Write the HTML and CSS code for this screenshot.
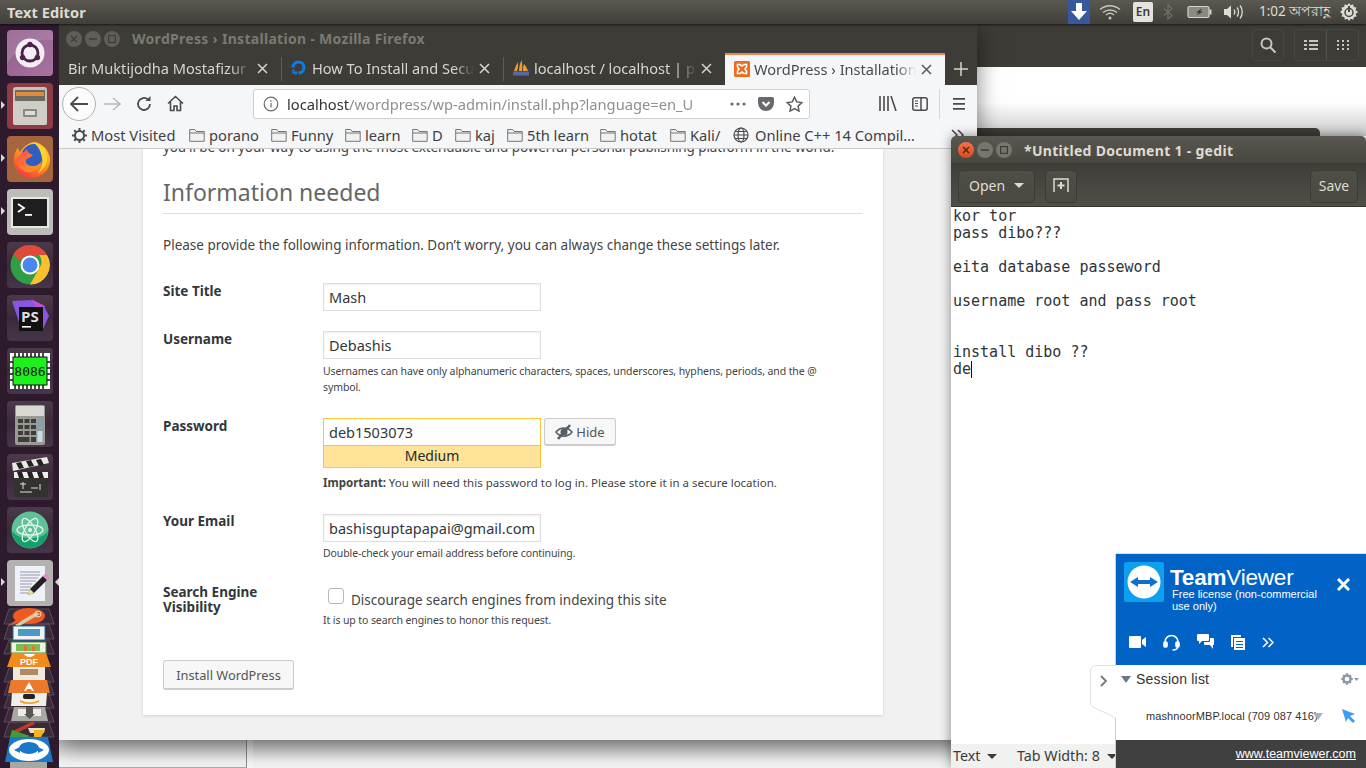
FILE: index.html
```html
<!DOCTYPE html>
<html lang="en">
<head>
<meta charset="utf-8">
<title>Desktop</title>
<link rel="stylesheet" href="styles.css">
</head>
<body>
<div class="screen">
  <header class="topbar">
    <span class="app-name">Text Editor</span>
    <div class="tray">
      <span class="tray-dl"><svg width="22" height="24" viewBox="0 0 22 24"><path d="M8 3h6v8h5l-8 9-8-9h5z" fill="#fff"/></svg></span>
      <svg class="t-wifi" width="22" height="16" viewBox="0 0 22 16" fill="none" stroke="#c9c6bd" stroke-width="1.4"><path d="M1 5.500c6-5 14-5 20 0M4 8.500c4-3.400 10-3.400 14 0M7 11c2.400-2 5.600-2 8 0"/><circle cx="11" cy="14" r="1.500" fill="#c9c6bd" stroke="none"/></svg>
      <span class="t-en">En</span>
      <svg class="t-bt" width="10" height="16" viewBox="0 0 10 16" fill="none" stroke="#6f6d66" stroke-width="1.300"><path d="M1 4.500l8 7-4 3.500V1l4 3.500-8 7"/></svg>
      <svg class="t-bat" width="25" height="14" viewBox="0 0 25 14"><rect x="1" y="1.500" width="21" height="11" rx="1.500" fill="#8b8981" stroke="#d5d2c9" stroke-width="1.200"/><rect x="22.500" y="4.500" width="2" height="5" fill="#d5d2c9"/><path d="M15 3.500l-6 4h3l-3 3 7-4h-3z" fill="#2f2e2a"/></svg>
      <svg class="t-vol" width="21" height="16" viewBox="0 0 21 16" fill="none" stroke="#dedbd2" stroke-width="1.300"><path d="M1 5h3l4-3.500v13L4 11H1z" fill="#dedbd2" stroke="none"/><path d="M11 5.500c1 1.500 1 3.500 0 5M14 3.500c2 2.500 2 6.500 0 9M17 1.500c3 3.500 3 9.500 0 13"/></svg>
      <span class="t-clock">1:02 অপরাহ্ণ</span>
      <svg class="t-pow" width="18" height="18" viewBox="0 0 18 18"><path d="M9 0l1.500 2.300 2.600-1 .6 2.700 2.700.5-.9 2.600L18 9l-2.300 1.900.9 2.600-2.700.5-.6 2.700-2.600-1L9 18l-1.500-2.300-2.600 1-.6-2.700-2.700-.5.9-2.600L0 9l2.300-1.900-.9-2.600 2.700-.5.6-2.700 2.600 1z" fill="#dedbd2"/><circle cx="9" cy="9.500" r="4" fill="none" stroke="#4a4943" stroke-width="1.500"/><rect x="8" y="3" width="2" height="6" fill="#4a4943"/></svg>
    </div>
  </header>

  <nav class="dock">
    <div class="tile t-purple"><svg width="46" height="46" viewBox="0 0 46 46"><path d="M0 34C12 14 30 8 46 10V0H4a4 4 0 0 0-4 4z" fill="#fff" opacity=".12"/><circle cx="23" cy="23" r="14.500" fill="#f4edf3"/><circle cx="23" cy="23" r="8" fill="none" stroke="#4d2248" stroke-width="2.800"/><circle cx="23" cy="14.500" r="2.700" fill="#4d2248"/><circle cx="15.600" cy="27.500" r="2.700" fill="#4d2248"/><circle cx="30.400" cy="27.500" r="2.700" fill="#4d2248"/></svg></div>
    <div class="tile t-red pip"><svg width="46" height="46" viewBox="0 0 46 46"><rect x="6" y="4" width="34" height="38" rx="3" fill="#c4c2ba"/><rect x="8" y="7" width="30" height="11" fill="#6b6a64"/><rect x="9" y="9" width="28" height="4" fill="#e08a3c"/><rect x="6" y="18" width="34" height="24" rx="2" fill="#cfcdc6"/><rect x="16" y="26" width="14" height="8" rx="1" fill="#8a8880"/><rect x="18" y="28" width="10" height="4" fill="#dedcd6"/></svg></div>
    <div class="tile t-orange pip"><svg width="46" height="46" viewBox="0 0 46 46"><defs><linearGradient id="fxa" x1=".8" y1="0" x2=".2" y2="1"><stop offset="0" stop-color="#ffd02e"/><stop offset=".45" stop-color="#ff9a1e"/><stop offset="1" stop-color="#f5303c"/></linearGradient><linearGradient id="fxb" x1="0" y1="0" x2="1" y2="1"><stop offset="0" stop-color="#ff4a4a"/><stop offset="1" stop-color="#ffa01e"/></linearGradient></defs><path d="M7 20c1-4 3-7 4-9 0 2 1 4 2 5 3-5 8-9 14-10 8 1 14 7 16 16 1 11-8 20-19 20S5 32 7 20z" fill="url(#fxa)"/><path d="M14 22c0-9 7-15 15-14 6 2 9 8 8 14-2 8-9 13-16 10-5-2-7-6-7-10z" fill="#2d5ec0"/><path d="M27 7c6 0 12 5 13 12 1 8-3 15-9 18 4-5 5-10 4-15-1-6-3-11-8-15z" fill="#ffd02e"/><path d="M10 24c1-4 4-7 7-8l3-3c0 3 3 5 6 6-2 3-6 3-7 5-1 3 2 6 7 6 4 0 7-2 9-6-1 8-8 13-15 12-6-1-10-6-10-12z" fill="url(#fxb)"/></svg></div>
    <div class="tile t-grey pip"><svg width="46" height="46" viewBox="0 0 46 46"><rect x="4" y="8" width="38" height="31" fill="#e8e8e4"/><rect x="6" y="10" width="34" height="27" fill="#1e1e1e"/><path d="M11 15l6 4-6 4" fill="none" stroke="#fff" stroke-width="1.800"/><rect x="18" y="25" width="7" height="1.800" fill="#fff"/></svg></div>
    <div class="tile t-dark"><svg width="46" height="46" viewBox="0 0 46 46"><circle cx="23" cy="23" r="19.500" fill="#2f9e44"/><path d="M6 13A19.500 19.500 0 0 1 40 13H23a10 10 0 0 0-9 6z" fill="#e04a3a"/><path d="M40 13A19.500 19.500 0 0 1 23 42.500l9-16a10 10 0 0 0 0-13.500z" fill="#fbc02d"/><circle cx="23" cy="23" r="9.500" fill="#fff"/><circle cx="23" cy="23" r="7.500" fill="#4a86ee"/></svg></div>
    <div class="tile t-dark"><svg width="46" height="46" viewBox="0 0 46 46"><path d="M5 6l18-1 14 6 5 10-6 13-13 2-10-6z" fill="#8a55e0"/><path d="M24 4l14 7-6 6z" fill="#c34fd8"/><rect x="12" y="12" width="24" height="24" fill="#111"/><text class="tile-ps" x="14" y="27">PS</text><rect x="15" y="31" width="9" height="1.600" fill="#fff"/></svg></div>
    <div class="tile t-dark"><svg width="46" height="46" viewBox="0 0 46 46"><rect x="3" y="5" width="40" height="36" fill="#fff"/><path d="M8 5v4M12 5v4M16 5v4M20 5v4M24 5v4M28 5v4M32 5v4M36 5v4M8 37v4M12 37v4M16 37v4M20 37v4M24 37v4M28 37v4M32 37v4M36 37v4M3 14h3M3 20h3M3 26h3M3 32h3M40 14h3M40 20h3M40 26h3M40 32h3" stroke="#111" stroke-width="1.500"/><rect x="6" y="9" width="34" height="28" fill="#1ef01e" stroke="#111"/><text class="tile-8086" x="23" y="28">8086</text></svg></div>
    <div class="tile t-dark"><svg width="46" height="46" viewBox="0 0 46 46"><rect x="8" y="4" width="30" height="40" rx="2" fill="#9a9a94"/><rect x="9" y="5" width="28" height="10" fill="#d8d8d2"/><g fill="#3d3d39"><rect x="11" y="18" width="5" height="4"/><rect x="17.500" y="18" width="5" height="4"/><rect x="24" y="18" width="5" height="4"/><rect x="11" y="24" width="5" height="4"/><rect x="17.500" y="24" width="5" height="4"/><rect x="24" y="24" width="5" height="4"/><rect x="11" y="30" width="5" height="4"/><rect x="17.500" y="30" width="5" height="4"/><rect x="24" y="30" width="5" height="4"/><rect x="11" y="36" width="11.500" height="5"/><rect x="24" y="36" width="5" height="5"/></g><rect x="30.500" y="18" width="5" height="4" fill="#7fa6b8"/><rect x="30.500" y="24" width="5" height="4" fill="#7fa6b8"/><rect x="30.500" y="30" width="5" height="11" fill="#c8dbe6"/></svg></div>
    <div class="tile t-dark"><svg width="46" height="46" viewBox="0 0 46 46"><rect x="7" y="18" width="34" height="25" fill="#34322f"/><path d="M5 9L40 3l2 6L6 17z" fill="#e8e8e4"/><path d="M9 9l5-1 3 6-5 1zM19 7l5-1 3 6-5 1zM29 6l5-1 3 6-5 1z" fill="#222"/><rect x="7" y="18" width="34" height="6" fill="#eee"/><path d="M10 18h5l2 6h-5zM20 18h5l2 6h-5zM30 18h5l2 6h-5z" fill="#222"/><path d="M13 30h6M16 28v7M24 34h7M33 30v6M13 38h12" stroke="#ddd" stroke-width="1"/></svg></div>
    <div class="tile t-dark"><svg width="46" height="46" viewBox="0 0 46 46"><circle cx="23" cy="23" r="18.500" fill="#5ec198"/><path d="M5 23a18 18 0 0 0 36 0c-3 11-33 11-36 0z" fill="#14a06a"/><g fill="none" stroke="#e4f7ec" stroke-width="1.300"><ellipse cx="23" cy="23" rx="13" ry="5" transform="rotate(60 23 23)"/><ellipse cx="23" cy="23" rx="13" ry="5" transform="rotate(-60 23 23)"/><ellipse cx="23" cy="23" rx="13" ry="5"/></g><circle cx="23" cy="23" r="2" fill="#e4f7ec"/></svg></div>
    <div class="tile t-light pip pip-r"><svg width="46" height="46" viewBox="0 0 46 46"><rect x="8" y="6" width="30" height="35" fill="#eef1f6"/><path d="M13 12h20M13 15h20M13 18h18M13 21h16M13 24h12M13 27h11M13 30h9M13 33h8" stroke="#99a" stroke-width="1"/><path d="M21 35l2-6 13-13 4 4-13 13z" fill="#222"/><path d="M36 16l3-3 4 4-3 3z" fill="#e78ac4"/><path d="M21 35l2-6 4 4z" fill="#f1e28a"/></svg></div>
    <svg class="stack" width="59" height="162" viewBox="0 0 59 162">
      <g fill="#fff" fill-opacity=".07" stroke="#5a4a5a" stroke-width="1"><path d="M9 3h40l5 15H4zM9 18h40l5 15H4zM9 34h40l5 14H4zM9 62h40l5 14H4zM9 75h40l5 14H4zM9 88h40l5 14H4zM9 102h40l5 14H4zM9 116h40l5 15H4z"/></g>
      <ellipse cx="29" cy="10" rx="16" ry="8" fill="#ef5a22"/><path d="M8 20l8-6h10z" fill="#ef5a22"/><path d="M15 19l21-13 4 2-22 13z" fill="#d9c9a4"/><circle cx="38" cy="8" r="3" fill="none" stroke="#e8e2d4"/>
      <rect x="13" y="20" width="32" height="14" fill="#f2f2ee" stroke="#1b6f9e"/><rect x="18" y="23" width="22" height="7" fill="#4a9ac4"/>
      <rect x="11" y="36" width="35" height="11" fill="#eef2e8" stroke="#4d8a30"/><path d="M16 38h24v7H16z" fill="#7dbd56"/><path d="M24 39h3v6h-3zM32 40h3v5h-3z" fill="#e0763a"/>
      <path d="M12 47h34l5 14H7z" fill="#f28a1c"/><path d="M24 48c2 4 9 4 11 0z" fill="#fff"/><text class="stack-pdf" x="29" y="59">PDF</text>
      <rect x="13" y="61" width="32" height="13" fill="#efe9dd"/><rect x="20" y="63" width="18" height="6" fill="#b08a64"/>
      <path d="M11 74h36l3 13H8z" fill="#ec7a2c"/><path d="M29 76l5 9h-2l-1-2h-4l-1 2h-2z" fill="#fff"/>
      <path d="M12 87h35l-1 13H11z" fill="#efefe9"/><path d="M20 95c5 3 13 3 19 0" fill="none" stroke="#f29a1c" stroke-width="1.500"/><rect x="23" y="88" width="12" height="5" fill="#222" rx="2"/>
      <path d="M14 101h31l3 14H11z" fill="#a9a9a3"/><rect x="18" y="103" width="23" height="7" fill="#ececea"/><path d="M26 101h7v7l2 0-5.500 5-5.500-5h2z" fill="#565652"/>
      <path d="M11 126l22-11 2 3-22 11z" fill="#c0392b"/><path d="M12 124l18 6-6 3-14-2z" fill="#3e9d3a"/><path d="M28 122h17l-1 5H30z" fill="#e9dfc9"/><path d="M34 124h11l-4 7h-7z" fill="#f2b61c"/>
      <path d="M10 131h38l5 25H5z" fill="#1b78c9"/><ellipse cx="29" cy="144" rx="20" ry="11" fill="#fff"/><ellipse cx="29" cy="142" rx="10" ry="6" fill="#1b78c9"/><path d="M14 144l6-3v2h18v-2l6 3-6 3v-2H20v2z" fill="#1b78c9"/>
      <rect x="10" y="156" width="37" height="6" fill="#a7a7a3"/>
    </svg>
  </nav>

  <div class="bg-files">
    <div class="files-head">
      <span class="fh-btn"><svg width="18" height="18" viewBox="0 0 18 18" fill="none" stroke="#c9c6bd" stroke-width="2"><circle cx="7.500" cy="7.500" r="5"/><path d="M11 11l5.500 5.500"/></svg></span>
      <span class="fh-group">
        <span class="fh-seg"><svg width="14" height="12" viewBox="0 0 14 12" fill="#c9c6bd"><path d="M0 1h3v2H0zM5 1h9v2H5zM0 5h3v2H0zM5 5h9v2H5zM0 9h3v2H0zM5 9h9v2H5z"/></svg></span>
        <span class="fh-seg fh-seg2"><svg width="12" height="12" viewBox="0 0 12 12" fill="#c9c6bd"><path d="M0 1h2v2H0zM5 1h2v2H5zM10 1h2v2h-2zM0 5h2v2H0zM5 5h2v2H5zM10 5h2v2h-2zM0 9h2v2H0zM5 9h2v2H5zM10 9h2v2h-2z"/></svg></span>
      </span>
    </div>
  </div>
  <div class="bg-dark"></div>
  <div class="bg-bottom"><div class="bg-bottom-a"></div><div class="bg-bottom-b"></div></div>

  <main class="firefox">
    <div class="ff-title">
      <span class="wbtn"><svg width="8" height="8" viewBox="0 0 8 8" stroke="#3d3c37" stroke-width="1.200"><path d="M1 1l6 6M7 1L1 7"/></svg></span>
      <span class="wbtn"><svg width="8" height="8" viewBox="0 0 8 8" stroke="#3d3c37" stroke-width="1.400"><path d="M0 4h8"/></svg></span>
      <span class="wbtn"><svg width="8" height="8" viewBox="0 0 8 8" fill="none" stroke="#3d3c37" stroke-width="1.200"><rect x=".6" y=".6" width="6.800" height="6.800"/></svg></span>
      <span class="ff-title-text">WordPress › Installation - Mozilla Firefox</span>
    </div>
    <div class="tabs">
      <div class="tab"><span class="tab-label tab-first">Bir Muktijodha Mostafizur</span><svg class="tab-x" width="11" height="11" viewBox="0 0 11 11"><path d="M1 1l9 9M10 1l-9 9"/></svg></div>
      <div class="tab"><svg class="fav" width="18" height="18" viewBox="0 0 18 18" fill="none"><path d="M8.500 15.500v-3A4 4 0 1 0 4.500 8.500h-3a7 7 0 1 1 7 7z" fill="#0d7ee8"/><path d="M4.500 12.500h2.700v3H4.500zM2.300 10.500h2.200v2H2.300zM2.300 12.700h2v2h-2z" fill="#0d7ee8"/></svg><span class="tab-label">How To Install and Secu</span><svg class="tab-x" width="11" height="11" viewBox="0 0 11 11"><path d="M1 1l9 9M10 1l-9 9"/></svg></div>
      <div class="tab"><svg class="fav" width="18" height="18" viewBox="0 0 18 18"><path d="M2 12C3 8 5 5 6 3c.5 3 0 6-1 9zM7 12c0-4 1-7 2.500-11 1 4 1 8 .5 11zM11 12c0-3 0-5 1-7 2 2 3 4 4 7z" fill="#ee9a2c"/><rect x="1" y="12.500" width="16" height="4" fill="#5a68a8"/></svg><span class="tab-label">localhost / localhost | ph</span><svg class="tab-x" width="11" height="11" viewBox="0 0 11 11"><path d="M1 1l9 9M10 1l-9 9"/></svg></div>
      <div class="tab tab-active"><svg class="fav" width="16" height="16" viewBox="0 0 16 16"><rect width="16" height="16" rx="1.500" fill="#f26b1d"/><path d="M3.500 3.500H6L8 5l2-1.500h2.500V6L11 8l1.500 2v2.500H10L8 11l-2 1.500H3.500V10L5 8 3.500 6z" fill="none" stroke="#fff" stroke-width="1.600"/></svg><span class="tab-label">WordPress › Installation</span><svg class="tab-x" width="11" height="11" viewBox="0 0 11 11"><path d="M1 1l9 9M10 1l-9 9"/></svg></div>
      <div class="tab-new"><svg width="14" height="14" viewBox="0 0 14 14" stroke="#d6d4cc" stroke-width="1.500"><path d="M7 0v14M0 7h14"/></svg></div>
    </div>
    <div class="nav">
      <span class="back"><svg width="20" height="18" viewBox="0 0 20 18" fill="none" stroke="#4a4a4f" stroke-width="1.800"><path d="M9 2L2 9l7 7M2 9h17"/></svg></span>
      <svg class="fwd" width="18" height="16" viewBox="0 0 18 16" fill="none" stroke="#b9b9bb" stroke-width="1.600"><path d="M10 2l7 6-7 6M17 8H1"/></svg>
      <svg class="rel" width="16" height="16" viewBox="0 0 16 16" fill="none" stroke="#4a4a4f" stroke-width="1.800"><path d="M14 8a6 6 0 1 1-2-4.500"/><path d="M14.500 0v5h-5z" fill="#4a4a4f" stroke="none"/></svg>
      <svg class="home" width="17" height="17" viewBox="0 0 17 17" fill="none" stroke="#4a4a4f" stroke-width="1.600"><path d="M1 8.500L8.500 1.500 16 8.500M3.500 7v8.500h3.500V11h3v4.500h3.500V7"/></svg>
      <div class="url">
        <svg class="u-info" width="16" height="16" viewBox="0 0 16 16" fill="none" stroke="#6a6a6e" stroke-width="1.200"><circle cx="8" cy="8" r="6.800"/><path d="M8 7v4.500M8 4.200v1.500"/></svg>
        <span class="u-text"><b>localhost</b>/wordpress/wp-admin/install.php?language=en_U</span>
        <svg class="u-dots" width="16" height="4" viewBox="0 0 16 4" fill="#6a6a6e"><circle cx="2" cy="2" r="1.600"/><circle cx="8" cy="2" r="1.600"/><circle cx="14" cy="2" r="1.600"/></svg>
        <svg class="u-pocket" width="16" height="14" viewBox="0 0 16 14"><path d="M1.500 0h13A1.500 1.500 0 0 1 16 1.500V6a8 8 0 0 1-16 0V1.500A1.500 1.500 0 0 1 1.500 0z" fill="#6a6a6e"/><path d="M4.500 5L8 8.500 11.500 5" fill="none" stroke="#fff" stroke-width="2"/></svg>
        <svg class="u-star" width="17" height="16" viewBox="0 0 17 16" fill="none" stroke="#5c5c60" stroke-width="1.500"><path d="M8.500 1.200l2.200 4.700 5.100.7-3.700 3.500.9 5-4.500-2.500L4 15.100l.9-5L1.200 6.600l5.100-.7z"/></svg>
      </div>
      <svg class="n-lib" width="18" height="15" viewBox="0 0 18 15" fill="none" stroke="#4a4a4f" stroke-width="1.600"><path d="M1 0v15M5 0v15M9 0v15M12 0l5 15"/></svg>
      <svg class="n-side" width="16" height="14" viewBox="0 0 16 14" fill="none" stroke="#4a4a4f" stroke-width="1.500"><rect x=".8" y=".8" width="14.400" height="12.400" rx="2"/><path d="M9 1v12"/><path d="M3 4h3M3 6.500h3M3 9h3" stroke-width="1"/></svg>
      <span class="n-div"></span>
      <svg class="n-menu" width="14" height="12" viewBox="0 0 14 12" fill="#4a4a4f"><path d="M1 0h12v1.800H1zM1 5h12v1.800H1zM1 10h12v1.800H1z"/></svg>
    </div>
    <div class="bookmarks">
      <svg class="bm-ic bm-gear" width="15" height="15" viewBox="0 0 15 15"><circle cx="7.500" cy="7.500" r="4.500" fill="none" stroke="#4a4a4f" stroke-width="2"/><path d="M7.500 0v3M7.500 12v3M0 7.500h3M12 7.500h3M2.200 2.200l2 2M10.800 10.800l2 2M2.200 12.800l2-2M10.800 4.200l2-2" stroke="#4a4a4f" stroke-width="2"/></svg><span class="bm bm1">Most Visited</span>
      <svg class="bm-ic" width="16" height="14" viewBox="0 0 16 14"><use href="#folder"/></svg><span class="bm bm2">porano</span>
      <svg class="bm-ic" width="16" height="14" viewBox="0 0 16 14"><use href="#folder"/></svg><span class="bm bm3">Funny</span>
      <svg class="bm-ic" width="16" height="14" viewBox="0 0 16 14"><use href="#folder"/></svg><span class="bm bm4">learn</span>
      <svg class="bm-ic" width="16" height="14" viewBox="0 0 16 14"><use href="#folder"/></svg><span class="bm bm5">D</span>
      <svg class="bm-ic" width="16" height="14" viewBox="0 0 16 14"><use href="#folder"/></svg><span class="bm bm6">kaj</span>
      <svg class="bm-ic" width="16" height="14" viewBox="0 0 16 14"><use href="#folder"/></svg><span class="bm bm7">5th learn</span>
      <svg class="bm-ic" width="16" height="14" viewBox="0 0 16 14"><use href="#folder"/></svg><span class="bm bm8">hotat</span>
      <svg class="bm-ic" width="16" height="14" viewBox="0 0 16 14"><use href="#folder"/></svg><span class="bm bm9">Kali/</span>
      <svg class="bm-ic bm-globe" width="16" height="16" viewBox="0 0 16 16" fill="none" stroke="#4a4a4f" stroke-width="1.200"><circle cx="8" cy="8" r="7"/><ellipse cx="8" cy="8" rx="3" ry="7"/><path d="M1 8h14M2 4.500h12M2 11.500h12"/></svg><span class="bm bm10">Online C++ 14 Compil…</span>
      <svg class="bm-more" width="14" height="12" viewBox="0 0 14 12" fill="none" stroke="#4a4a4f" stroke-width="1.500"><path d="M1 1l5 5-5 5M7 1l5 5-5 5"/></svg>
      <svg class="hidden-defs" width="0" height="0"><defs><g id="folder"><path d="M.7 13.300V1.500h5l1.500 2h8v9.800z" fill="#f1f1ef" stroke="#77777a" stroke-width="1"/><path d="M.7 5h14.500" stroke="#77777a" stroke-width="1"/></g></defs></svg>
    </div>
    <div class="page">
      <section class="card">
        <p class="clipped">you'll be on your way to using the most extendable and powerful personal publishing platform in the world.</p>
        <h1 class="heading">Information needed</h1>
        <p class="intro">Please provide the following information. Don’t worry, you can always change these settings later.</p>

        <div class="row row-site">
          <label class="lbl">Site Title</label>
          <div class="field"><div class="input">Mash</div></div>
        </div>
        <div class="row row-user">
          <label class="lbl">Username</label>
          <div class="field"><div class="input">Debashis</div><p class="hint hint-user">Usernames can have only alphanumeric characters, spaces, underscores, hyphens, periods, and the @ symbol.</p></div>
        </div>
        <div class="row row-pass">
          <label class="lbl">Password</label>
          <div class="field">
            <div class="pass-line">
              <div class="pass-box"><div class="pass-in">deb1503073</div><div class="pass-str">Medium</div></div>
              <button class="hide-btn"><svg width="18" height="16" viewBox="0 0 18 16" fill="none"><path d="M1 8c4-5.500 12-5.500 16 0-4 5.500-12 5.500-16 0z" stroke="#555d66" stroke-width="1.500"/><circle cx="9" cy="8" r="3.500" fill="#555d66"/><path d="M3 15L15 1" stroke="#555d66" stroke-width="2.500"/></svg>Hide</button>
            </div>
            <p class="hint hint-imp"><strong>Important:</strong> You will need this password to log in. Please store it in a secure location.</p>
          </div>
        </div>
        <div class="row row-mail">
          <label class="lbl">Your Email</label>
          <div class="field"><div class="input">bashisguptapapai@gmail.com</div><p class="hint hint-mail">Double-check your email address before continuing.</p></div>
        </div>
        <div class="row row-seo">
          <label class="lbl">Search Engine Visibility</label>
          <div class="field">
            <div class="check-line"><span class="check"></span><span class="check-txt">Discourage search engines from indexing this site</span></div>
            <p class="hint hint-seo">It is up to search engines to honor this request.</p>
          </div>
        </div>
        <button class="install">Install WordPress</button>
      </section>
    </div>
  </main>

  <section class="gedit">
    <div class="g-title">
      <span class="wbtn g-close"><svg width="8" height="8" viewBox="0 0 8 8" stroke="#5a1a0a" stroke-width="1.300"><path d="M1 1l6 6M7 1L1 7"/></svg></span>
      <span class="wbtn g-b"><svg width="8" height="8" viewBox="0 0 8 8" stroke="#3d3c37" stroke-width="1.400"><path d="M0 4h8"/></svg></span>
      <span class="wbtn g-b"><svg width="8" height="8" viewBox="0 0 8 8" fill="none" stroke="#3d3c37" stroke-width="1.200"><rect x=".6" y=".6" width="6.800" height="6.800"/></svg></span>
      <span class="g-title-text">*Untitled Document 1 - gedit</span>
    </div>
    <div class="g-bar">
      <span class="g-btn g-open">Open<i class="caret"></i></span>
      <span class="g-btn g-new"><svg width="17" height="14" viewBox="0 0 17 14" fill="none" stroke="#dedbd2" stroke-width="1.500"><path d="M1 14V1h14v13"/><path d="M8 4v7M4.500 7.500h7" stroke-width="2"/></svg></span>
      <span class="g-btn g-save">Save</span>
    </div>
    <pre class="g-text">kor tor
pass dibo???

eita database passeword

username root and pass root


install dibo ??
de<span class="cursor"></span></pre>
    <div class="g-status"><span class="g-s1">Text<i class="caret caret-d"></i></span><span class="g-s2">Tab Width: 8<i class="caret caret-d"></i></span></div>
  </section>

  <aside class="tv">
    <div class="tv-tab"><svg class="tv-tab-bg" width="26" height="54" viewBox="0 0 26 54"><path d="M26 .5H6A5.500 5.500 0 0 0 .5 6v32c0 2 1 3 2.500 4l23 11" fill="#fff" stroke="#dde1e6"/></svg><svg class="tv-tab-ch" width="8" height="12" viewBox="0 0 8 12" fill="none" stroke="#6d7a88" stroke-width="1.800"><path d="M1 1l5 5-5 5"/></svg></div>
    <div class="tv-top">
      <div class="tv-head">
        <svg class="tv-logo" width="40" height="40" viewBox="0 0 40 40"><rect width="40" height="40" rx="2" fill="#0ea0ee"/><circle cx="20" cy="20" r="16.500" fill="#fff"/><path d="M6 20l8-5v3h12v-3l8 5-8 5v-3H14v3z" fill="#0e6fd0"/></svg>
        <div class="tv-brand">
          <div class="tv-name"><b>Team</b>Viewer</div>
          <div class="tv-lic">Free license (non-commercial use only)</div>
        </div>
        <svg class="tv-close" width="13" height="13" viewBox="0 0 13 13" stroke="#fff" stroke-width="3"><path d="M1 1l11 11M12 1L1 12"/></svg>
      </div>
      <div class="tv-icons">
        <svg width="17" height="12" viewBox="0 0 17 12" fill="#fff"><rect width="12" height="12" rx="1"/><path d="M13 4l4-3v10l-4-3z"/></svg>
        <svg width="17" height="17" viewBox="0 0 17 17" fill="none" stroke="#fff" stroke-width="1.600"><path d="M2 10V8a6.500 6.500 0 0 1 13 0v2"/><rect x="1" y="8" width="3" height="5" rx="1" fill="#fff"/><rect x="13" y="8" width="3" height="5" rx="1" fill="#fff"/><path d="M14.500 13c0 2-2 3-5 3"/></svg>
        <svg width="17" height="16" viewBox="0 0 17 16" fill="#fff"><path d="M1 0h10a1 1 0 0 1 1 1v5a1 1 0 0 1-1 1H5L2 10V7H1a1 1 0 0 1-1-1V1a1 1 0 0 1 1-1z"/><path d="M13 4h3a1 1 0 0 1 1 1v5a1 1 0 0 1-1 1v4l-3-4H8a1 1 0 0 1-1-1V8h5a1 1 0 0 0 1-1z"/></svg>
        <svg width="14" height="15" viewBox="0 0 14 15" fill="#fff"><path d="M0 0h10v2H2v10H0z"/><path d="M3 3h11v12H3zM5 6v1h7V6zM5 9v1h7V9zM5 12v1h7v-1z" fill-rule="evenodd"/></svg>
        <svg width="12" height="11" viewBox="0 0 12 11" fill="none" stroke="#fff" stroke-width="1.500"><path d="M1 1l4.500 4.500L1 10M6.500 1L11 5.500 6.500 10"/></svg>
      </div>
    </div>
    <div class="tv-list">
      <div class="tv-sess"><i class="tv-tri"></i><span>Session list</span><svg class="tv-gear" width="18" height="12" viewBox="0 0 18 12"><circle cx="6" cy="6" r="3.600" fill="none" stroke="#8a96a3" stroke-width="2.500"/><path d="M6 0v12M0 6h12M2 2l8 8M2 10l8-8" stroke="#8a96a3" stroke-width="1.500" stroke-dasharray="2 8"/><path d="M13 5h5l-2.500 3z" fill="#8a96a3"/></svg></div>
      <div class="tv-item"><span>mashnoorMBP.local (709 087 416)</span><i class="tv-tri2"></i><svg class="tv-cur" width="14" height="14" viewBox="0 0 14 14"><path d="M0 0l13 5-5 2 5 5-2 2-5-5-2 4z" fill="#3d9bf0"/></svg></div>
    </div>
    <div class="tv-foot"><span class="tv-url">www.teamviewer.com</span></div>
  </aside>
</div>
</body>
</html>
```
FILE: styles.css
```css
* { box-sizing: border-box; }
html, body { margin: 0; padding: 0; overflow: hidden; background: #fff; }
p, h1, pre { margin: 0; }
i { display: inline-block; }
.screen { position: relative; width: 1366px; height: 768px; overflow: hidden; font-family: "Noto Sans", sans-serif; background: #fff; }

/* top bar */
.topbar { position: absolute; z-index: 5; left: 0; top: 0; width: 1366px; height: 24px; display: flex; align-items: center; justify-content: space-between; background: linear-gradient(#5a5850, #403f3a); box-shadow: 0 1px 2px rgba(0,0,0,.6); }
.app-name { margin-left: 7px; color: #dfdbd2; font-size: 14.500px; font-weight: 700; letter-spacing: .1px; }
.tray { display: flex; align-items: center; height: 24px; }
.tray-dl { width: 22px; height: 24px; background: #37589c; display: flex; margin-right: 9px; }
.t-wifi { margin-right: 12px; }
.t-en { width: 20px; height: 20px; border-radius: 2px; background: #e6e3dc; color: #3c3b37; font-size: 12px; font-weight: 600; text-align: center; line-height: 20px; margin-right: 10px; }
.t-bt { margin-right: 14px; }
.t-bat { margin-right: 11px; }
.t-vol { margin-right: 15px; }
.t-clock { color: #dfdbd2; font-size: 13.500px; font-family: "Noto Sans", "DejaVu Sans", sans-serif; width: 81px; white-space: nowrap; }
.t-pow { margin-right: 8px; }

/* launcher */
.dock { position: absolute; z-index: 4; left: 0; top: 24px; width: 59px; height: 744px; background: #2d1a2c; display: flex; flex-direction: column; align-items: center; gap: 7px; padding-top: 6px; }
.tile { position: relative; width: 46px; height: 46px; border-radius: 4px; flex: none; }
.tile svg { display: block; }
.t-purple { background: linear-gradient(135deg, #8f5c8b, #a9739f); }
.t-red { background: #8e3b46; }
.t-orange { background: #a4653f; }
.t-grey { background: #bcbcb8; }
.t-dark { background: linear-gradient(#4b3b4a, #3a2a39 50%, #46364a); }
.t-light { background: #b4b2b0; }
.pip::before { content: ""; position: absolute; left: -6px; top: 18px; border: 4px solid transparent; border-left: 4px solid #dcd9d4; }
.pip-r::after { content: ""; position: absolute; right: -6px; top: 18px; border: 4px solid transparent; border-right: 4px solid #dcd9d4; border-left-width: 0; }
.tile-ps { font: 700 15px "Open Sans", sans-serif; fill: #ddd; }
.tile-8086 { font: 400 13px "DejaVu Sans Mono", monospace; text-anchor: middle; fill: #111; }
.stack { display: block; flex: none; margin-top: -7px; }
.stack-pdf { font: 700 9px "Liberation Sans", sans-serif; fill: #fff; text-anchor: middle; }

/* windows behind */
.bg-files { position: absolute; left: 977px; top: 24px; width: 389px; height: 112px; background: linear-gradient(#fff 55%, #fff 70%, #c8c8c8); }
.files-head { height: 43px; background: #3d3c37; display: flex; justify-content: flex-end; align-items: center; gap: 10px; padding: 0 7px 2px 0; }
.fh-btn { width: 32px; height: 32px; border: 1px solid #48473f; border-radius: 4px; display: flex; align-items: center; justify-content: center; }
.fh-group { display: flex; width: 65px; height: 32px; border: 1px solid #48473f; border-radius: 4px; }
.fh-seg { flex: 1; display: flex; align-items: center; justify-content: center; }
.fh-seg2 { border-left: 1px solid #55544c; }
.bg-dark { position: absolute; left: 977px; top: 128px; width: 343px; height: 30px; background: #3d3c37; border-radius: 0 5px 0 0; }
.bg-bottom { position: absolute; left: 59px; top: 740px; width: 900px; height: 28px; display: flex; background: linear-gradient(#c9c9c9, #f4f4f4 22px); }
.bg-bottom-a { width: 188px; border-right: 1px solid #8c8c8c; border-bottom: 1px solid #aaa; }
.bg-bottom-b { width: 6px; background: rgba(255,255,255,.35); }

/* firefox */
.firefox { position: absolute; left: 59px; top: 24px; width: 918px; height: 716px; display: flex; flex-direction: column; background: #f1f1f1; box-shadow: 0 6px 22px rgba(0,0,0,.5); }
.ff-title { height: 30px; flex: none; background: #3d3c37; display: flex; align-items: center; padding: 0 0 1px 7px; gap: 3px; }
.wbtn { width: 16px; height: 16px; border-radius: 50%; background: #605e58; display: flex; align-items: center; justify-content: center; flex: none; }
.ff-title-text { margin-left: 9px; color: #7b7972; font-size: 14px; font-weight: 700; letter-spacing: .3px; }
.tabs { height: 31px; flex: none; background: #3d3c37; display: flex; color: #d7d5cd; font-size: 14.600px; }
.tab { position: relative; width: 222px; display: flex; align-items: center; padding: 0 7px 3px 9px; }
.tab + .tab::before { content: ""; position: absolute; left: 0; top: 3px; bottom: 4px; width: 1px; background: #5e5d56; }
.tab-active::before, .tab-new::before { display: none; }
.fav { flex: none; margin-right: 4px; }
.tab-label { flex: 1; overflow: hidden; white-space: nowrap; -webkit-mask-image: linear-gradient(90deg, #000 88%, transparent); mask-image: linear-gradient(90deg, #000 88%, transparent); }
.tab-first { padding-right: 6px; }
.tab-x { flex: none; margin: 1px 6px 0 5px; fill: none; stroke: #d7d5cd; stroke-width: 1.500; }
.tab-active { width: 220px; background: #f5f6f7; color: #4a4a4f; border-top: 2px solid #f08152; margin-top: -1px; padding: 0 7px 3px 9px; }
.tab-active .tab-x { stroke: #5a5a5e; }
.tab-new { width: 33px; display: flex; align-items: center; justify-content: center; padding-bottom: 2px; }

.nav { height: 37px; flex: none; background: #f5f6f7; display: flex; align-items: center; position: relative; padding-left: 3px; }
.back { width: 34px; height: 34px; border: 1px solid #b1b1b3; border-radius: 50%; background: #fbfbfb; display: flex; align-items: center; justify-content: center; flex: none; margin-right: 7px; }
.fwd { flex: none; margin-right: 15px; }
.rel { flex: none; margin-right: 15px; }
.home { flex: none; margin-right: 69px; }
.url { width: 557px; height: 30px; flex: none; background: #fff; border: 1px solid #d0d0d2; border-radius: 3px; display: flex; align-items: center; padding-left: 9px; }
.u-info { flex: none; margin-right: 8px; }
.u-text { width: 437px; flex: none; overflow: hidden; white-space: nowrap; font-size: 14.700px; color: #8f8f93; -webkit-mask-image: linear-gradient(90deg, #000 92%, transparent); mask-image: linear-gradient(90deg, #000 92%, transparent); }
.u-text b { font-weight: 400; color: #333; }
.u-dots { flex: none; margin-left: 6px; margin-right: 12px; }
.u-pocket { flex: none; margin-right: 12px; }
.u-star { flex: none; }
.n-lib { flex: none; margin-left: 69px; margin-right: 15px; }
.n-side { flex: none; margin-right: 11px; }
.n-div { width: 1px; height: 30px; background: #d5d5d7; flex: none; margin-right: 12px; }
.n-menu { flex: none; }

.bookmarks { height: 27px; flex: none; background: #f5f6f7; border-bottom: 1px solid #c9c9cb; display: flex; align-items: center; padding-left: 13px; color: #3f3f44; font-size: 14.700px; position: relative; }
.bm-ic { flex: none; margin-right: 4px; }
.bm { white-space: nowrap; flex: none; }
.bm1 { width: 98px; } .bm2 { width: 62px; } .bm3 { width: 54px; } .bm4 { width: 47px; }
.bm5 { width: 23px; } .bm6 { width: 32px; } .bm7 { width: 73px; } .bm8 { width: 50px; } .bm9 { width: 43px; }
.bm-globe { margin-right: 6px; }
.bm10 { width: 160px; }
.bm-more { flex: none; margin-left: 36px; }
.hidden-defs { position: absolute; }

.page { flex: 1; overflow: hidden; padding: 0 94px 25px 84px; min-height: 0; }
.card { height: 566px; background: #fff; overflow: hidden; padding: 0 20px; box-shadow: 0 1px 3px rgba(0,0,0,.13); color: #444; font-size: 13.500px; }
.clipped { margin-top: -11px; height: 19px; font-size: 13.500px; letter-spacing: -.1px; line-height: 19px; white-space: nowrap; color: #444; }
.heading { margin-top: 22px; height: 35px; padding-bottom: 8px; border-bottom: 1px solid #dedede; font-size: 23px; line-height: 26px; font-weight: 400; color: #666; }
.intro { margin-top: 22px; line-height: 19px; height: 19px; font-size: 13.500px; white-space: nowrap; }
.row { display: grid; grid-template-columns: 160px 540px; }
.row-site { margin-top: 28px; height: 48px; }
.row-user { height: 87px; }
.row-pass { height: 96px; }
.row-mail { height: 71px; }
.row-seo { height: 75px; }
.lbl { font-size: 13.500px; font-weight: 700; color: #32373c; line-height: 16px; }
.row-mail .lbl { margin-top: -1px; }
.row-seo .lbl { width: 110px; line-height: 15px; }
.field { min-width: 0; }
.input { width: 218px; height: 28px; border: 1px solid #ddd; padding: 0 5px; font-size: 14.500px; line-height: 26px; color: #32373c; white-space: nowrap; overflow: hidden; box-shadow: inset 0 1px 2px rgba(0,0,0,.07); }
.hint { font-size: 10.500px; line-height: 16px; letter-spacing: -.1px; color: #444; }
.hint-user { margin-top: 4px; width: 510px; }
.pass-line { display: flex; gap: 3px; align-items: flex-start; }
.pass-box { width: 218px; border: 1px solid #ffc733; flex: none; }
.pass-in { height: 27px; line-height: 26px; padding: 0 5px; font-size: 14.500px; color: #32373c; background: #fff; border-bottom: 1px solid #ffc733; }
.pass-str { height: 21px; line-height: 20px; text-align: center; font-size: 14px; color: #23282d; background: #ffe399; }
.hide-btn { width: 72px; height: 28px; border: 1px solid #ccc; border-bottom-width: 2px; border-radius: 3px; background: #f7f7f7; font: 13px "Noto Sans", sans-serif; color: #555; display: flex; align-items: center; justify-content: center; gap: 3px; padding: 0; }
.hint-imp { margin-top: 7px; font-size: 11.500px; letter-spacing: 0; }
.hint-mail { margin-top: 3px; }
.check-line { display: flex; align-items: center; padding-left: 5px; height: 20px; margin-top: 1px; }
.check { width: 16px; height: 16px; border: 1px solid #b4b9be; border-radius: 3px; background: #fff; flex: none; margin-right: 7px; }
.check-txt { font-size: 13.500px; color: #444; position: relative; top: 4px; }
.hint-seo { margin-top: 6px; }
.install { display: block; width: 131px; height: 30px; margin-top: 0; border: 1px solid #ccc; border-bottom-width: 2px; border-radius: 3px; background: #f7f7f7; color: #555; font: 12.800px "Noto Sans", sans-serif; padding: 0; }

/* gedit */
.gedit { position: absolute; left: 951px; top: 136px; width: 415px; height: 632px; display: flex; flex-direction: column; background: #fff; border-radius: 5px 5px 0 0; box-shadow: 0 0 12px rgba(0,0,0,.45); overflow: hidden; }
.g-title { height: 27px; flex: none; background: linear-gradient(#5a5850, #47463f); display: flex; align-items: center; padding-left: 7px; gap: 3px; }
.g-close { background: linear-gradient(#f2764a, #d9481c); }
.g-b { background: #77756d; }
.g-title-text { margin-left: 9px; color: #dfdbd2; font-size: 14px; font-weight: 700; letter-spacing: .3px; padding-top: 2px; }
.g-bar { height: 44px; flex: none; background: linear-gradient(#3f3e39, #4f4e47); display: flex; align-items: flex-start; padding: 7px 8px 0 7px; gap: 10px; border-bottom: 1px solid #35342f; }
.g-btn { height: 33px; border: 1px solid #3c3b36; border-radius: 4px; color: #dfdbd2; font-size: 14px; display: flex; align-items: center; justify-content: center; background: linear-gradient(#4e4d46, #4a4942); padding-bottom: 3px; }
.g-open { width: 77px; gap: 9px; }
.g-new { width: 32px; }
.g-save { width: 48px; margin-left: auto; }
.caret { width: 0; height: 0; border: 5px solid transparent; border-top: 5px solid #dfdbd2; border-bottom: 0; }
.caret-d { border-top-color: #3c3b37; margin-left: 7px; vertical-align: 2px; }
.g-text { flex: 1; font-family: "DejaVu Sans Mono", monospace; font-size: 15px; line-height: 17px; padding: 1px 0 0 2px; color: #2e3436; }
.cursor { display: inline-block; width: 1px; height: 17px; background: #111; vertical-align: top; }
.g-status { height: 24px; flex: none; background: #f1f1ef; display: flex; align-items: center; padding: 0 0 2px 2px; font-size: 14.300px; color: #3c3b37; }
.g-s1 { width: 64px; }

/* teamviewer */
.tv { position: absolute; left: 1116px; top: 554px; width: 250px; height: 214px; display: flex; flex-direction: column; background: #fff; box-shadow: -1px 0 0 #ccd, 0 -1px 0 #dde; }
.tv-tab { position: absolute; left: -26px; top: 111px; width: 26px; height: 54px; }
.tv-tab-bg { display: block; }
.tv-tab-ch { position: absolute; left: 10px; top: 10px; }
.tv-top { height: 111px; flex: none; background: #0263c7; color: #fff; display: flex; flex-direction: column; }
.tv-head { display: flex; padding: 8px 0 0 8px; position: relative; height: 75px; }
.tv-logo { flex: none; }
.tv-brand { margin-left: 6px; }
.tv-name { font-size: 22.500px; line-height: 22px; margin-top: 5px; white-space: nowrap; letter-spacing: -.2px; font-family: "Liberation Sans", sans-serif; }
.tv-name b { font-weight: 700; }
.tv-lic { margin-left: 2px; margin-top: -1px; width: 150px; font-family: "Liberation Sans", sans-serif; font-size: 11px; line-height: 12px; }
.tv-close { position: absolute; left: 221px; top: 24px; }
.tv-icons { display: flex; align-items: center; gap: 17px; height: 26px; padding-left: 13px; }
.tv-list { flex: 1; position: relative; color: #333; font-family: "Liberation Sans", sans-serif; }
.tv-sess { display: flex; align-items: center; height: 28px; font-size: 14px; padding-left: 5px; letter-spacing: .2px; }
.tv-tri { width: 0; height: 0; border: 5px solid transparent; border-top: 7px solid #66788c; border-bottom: 0; margin-right: 5px; }
.tv-gear { flex: none; margin-left: auto; margin-right: 7px; }
.tv-item { display: flex; align-items: center; height: 22px; margin-top: 12px; padding-left: 30px; font-size: 11px; letter-spacing: .1px; position: relative; white-space: nowrap; }
.tv-tri2 { position: absolute; left: 197px; top: 8px; width: 0; height: 0; border: 5px solid transparent; border-top: 7px solid #a9b2bd; border-bottom: 0; }
.tv-cur { position: absolute; left: 226px; top: 4px; }
.tv-foot { height: 28px; flex: none; background: #404040; display: flex; align-items: center; justify-content: flex-end; padding-right: 10px; }
.tv-url { color: #fff; text-decoration: underline; font-family: "Liberation Sans", sans-serif; font-size: 12.500px; }
```
